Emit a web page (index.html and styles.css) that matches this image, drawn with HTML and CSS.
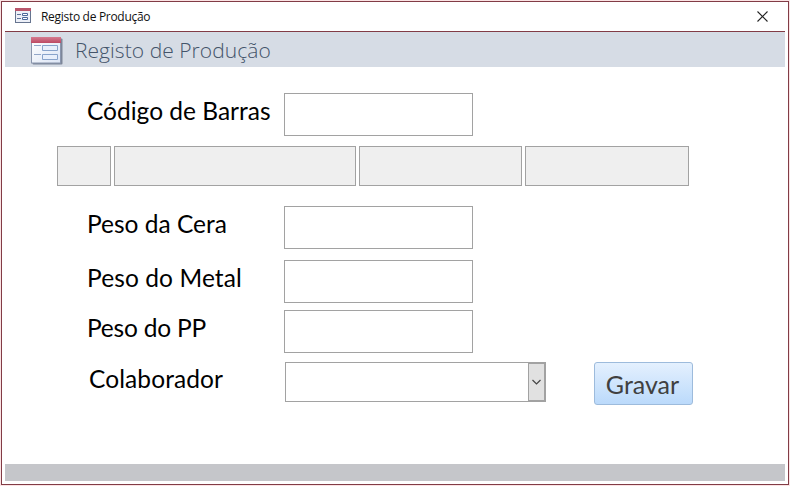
FILE: index.html
```html
<!DOCTYPE html>
<html lang="pt">
<head>
<meta charset="utf-8">
<title>Registo de Produção</title>
<link rel="stylesheet" href="styles.css">
</head>
<body>
<div class="window">
  <div class="titlebar">
    <svg class="small-icon" width="17" height="16" viewBox="0 0 17 16">
      <rect x=".5" y=".5" width="15" height="14" fill="#edf0f8" stroke="#66748f"/>
      <path d="M0 1.5h16" stroke="#b9566c" stroke-width="3"/>
      <path d="M2 6.500h4M2 10.500h4" stroke="#5e7398"/>
      <path d="M7.500 5.500h5v2h-5zM7.500 9.500h5v2h-5z" fill="#fff" stroke="#4b689b"/>
    </svg>
    <span class="caption">Registo de Produção</span>
    <svg class="close" width="11" height="11" viewBox="0 0 11 11"><path d="M.5.5l10 10M10.500.500l-10 10" stroke="#222" stroke-width="1.1"/></svg>
  </div>
  <header class="header">
    <svg class="form-icon" width="32" height="28" viewBox="0 0 32 28">
      <defs>
        <linearGradient id="red" x2="0" y2="1"><stop stop-color="#d57b90"/><stop offset="1" stop-color="#bc4963"/></linearGradient>
        <linearGradient id="paper" x2="1" y2="1"><stop stop-color="#fff"/><stop offset="1" stop-color="#dce5f5"/></linearGradient>
      </defs>
      <rect x="1.500" y="1.500" width="30" height="26" rx="1" fill="#7d8699"/>
      <rect x=".5" y=".5" width="29" height="25.500" fill="url(#paper)" stroke="#8995ad"/>
      <rect width="30" height="6" fill="url(#red)"/>
      <path d="M3 8.500h7M3 17.500h7" stroke="#91a6c8"/>
      <path d="M11.500 8.500h15v5h-15zM11.500 17.500h15v5h-15z" fill="#e8effb" stroke="#88a3cb"/>
    </svg>
    <h1 class="heading">Registo de Produção</h1>
  </header>
  <main class="form">
    <div class="row row-code"><label class="label t-code" for="code">Código de Barras</label><input class="field" id="code"></div>
    <div class="details"><output class="cell"></output><output class="cell"></output><output class="cell"></output><output class="cell"></output></div>
    <div class="row row-wax"><label class="label t-wax" for="wax">Peso da Cera</label><input class="field" id="wax"></div>
    <div class="row row-metal"><label class="label t-metal" for="metal">Peso do Metal</label><input class="field" id="metal"></div>
    <div class="row row-pp"><label class="label t-pp" for="pp">Peso do PP</label><input class="field" id="pp"></div>
    <div class="row row-worker">
      <span class="label t-worker">Colaborador</span>
      <div class="combo"><span class="arrow"><svg width="9" height="6" viewBox="0 0 9 6"><path d="M.5 1l4 4 4-4" fill="none" stroke="#444" stroke-width="1.2"/></svg></span></div>
      <button class="save">Gravar</button>
    </div>
  </main>
  <footer class="footer"></footer>
</div>
</body>
</html>
```
FILE: styles.css
```css
* { box-sizing: border-box; }
body {
  margin: 0;
  padding: 1px;
  height: 486px;
  background: #fbe3e4;
  overflow: hidden;
}
.window {
  width: 788px;
  height: 484px;
  padding: 0 3px 3px;
  border: 1px solid #823c46;
  background: #fff;
  display: flex;
  flex-direction: column;
}
.titlebar {
  height: 30px;
  flex: none;
  display: flex;
  align-items: center;
  padding: 0 17px 0 10px;
  border-bottom: 1px solid #823c46;
}
.small-icon { margin-top: -1px; }
.caption {
  margin-left: 9px;
  font: 12px/16px "Open Sans", sans-serif;
  letter-spacing: -0.3px;
  color: #111;
}
.close { margin-left: auto; }
.header {
  height: 35px;
  flex: none;
  display: flex;
  align-items: flex-start;
  padding: 4px 0 0 26px;
  background: #d6dce5;
}
.form-icon { margin-top: 1px; }
.heading {
  margin: 0 0 0 12px;
  font: 300 21px/28px "Open Sans", sans-serif;
  letter-spacing: 0.05px;
  color: #44546a;
}
.form { flex: 1; padding: 26px 0 0 52px; }
.row { display: flex; padding-left: 30px; }
.label {
  width: 197px;
  flex: none;
  font: 24.5px/36px Lato, sans-serif;
  color: #000;
  white-space: nowrap;
}
.field {
  width: 189px;
  height: 43px;
  padding: 0 4px;
  border: 1px solid #a2a2a2;
  border-radius: 0;
  background: #fff;
  outline: none;
}
.details {
  display: grid;
  grid-template-columns: 54px 242px 163px 164px;
  gap: 3px;
  margin: 10px 0 20px;
}
.cell { height: 40px; border: 1px solid #a2a2a2; background: #efefef; }
.row-metal { margin-top: 11px; }
.row-pp { margin-top: 7px; }
.t-metal { letter-spacing: 0.1px; }
.t-pp { letter-spacing: -0.2px; }
.row-worker { margin-top: 9px; padding-left: 32px; }
.t-worker { width: 196px; line-height: 34px; letter-spacing: 0.1px; }
.combo {
  width: 261px;
  height: 40px;
  border: 1px solid #a2a2a2;
  display: flex;
  justify-content: flex-end;
}
.arrow {
  width: 17px;
  border: 1px solid #a2a2a2;
  background: #e1e1e1;
  display: flex;
  align-items: center;
  justify-content: center;
}
.save {
  width: 99px;
  height: 43px;
  margin-left: 48px;
  padding: 0 2px 0 0;
  border: 1px solid #9dbbdc;
  border-radius: 3px;
  background: linear-gradient(#e4f0fe, #bbdafb);
  font: 25px/40px Lato, sans-serif;
  color: #404040;
}
.footer { height: 17px; flex: none; background: #c5c6ca; }
```
